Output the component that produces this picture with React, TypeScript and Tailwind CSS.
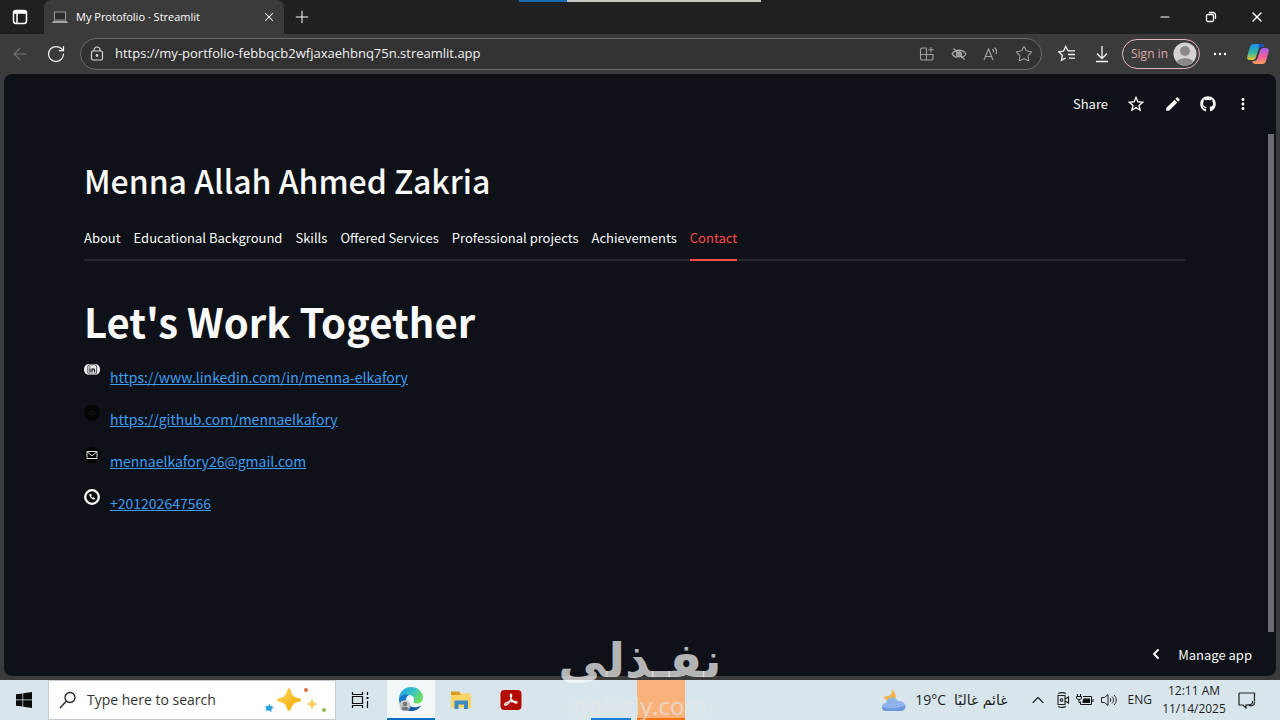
import { useState } from 'react';
import { ArrowLeft, ChevronLeft, ChevronUp, Minus, Plus, RotateCw, Star, X } from 'lucide-react';
import { FaGithub } from 'react-icons/fa';
import { MdEdit, MdMoreVert, MdStarOutline } from 'react-icons/md';

const tabs = [
  'About',
  'Educational Background',
  'Skills',
  'Offered Services',
  'Professional projects',
  'Achievements',
  'Contact',
];

const contacts = [
  { icon: <LinkedInIcon />, text: 'https://www.linkedin.com/in/menna-elkafory', href: 'https://www.linkedin.com/in/menna-elkafory' },
  { icon: <GithubIcon />, text: 'https://github.com/mennaelkafory', href: 'https://github.com/mennaelkafory' },
  { icon: <MailIcon />, text: 'mennaelkafory26@gmail.com', href: 'mailto:mennaelkafory26@gmail.com' },
  { icon: <PhoneIcon />, text: '+201202647566', href: 'tel:+201202647566' },
];

function LinkedInIcon() {
  return (
    <svg viewBox="0 0 16 16" className="w-4 h-4">
      <rect x="0" y="1" width="16" height="11" rx="5" fill="#e9eaec" />
      <rect x="3.800" y="1.800" width="8.800" height="9.400" rx="2" fill="#e9eaec" stroke="#14171f" strokeWidth=".7" />
      <path d="M5.900 5.500v4M5.900 3.400v1M8 5.500v4M8 7.600c0-2.400 2.500-2.200 2.500-.4v2.300" stroke="#14171f" strokeWidth="1.200" fill="none" />
    </svg>
  );
}

function GithubIcon() {
  return (
    <svg viewBox="0 0 16 16" className="w-4 h-4">
      <circle cx="8" cy="8" r="8" fill="#040507" />
      <path d="M4.500 8c.5-2 6.500-2 7 0 0 2-7 2-7 0" fill="none" stroke="#12151c" strokeWidth="1" />
    </svg>
  );
}

function MailIcon() {
  return (
    <svg viewBox="0 0 16 16" className="w-4 h-4">
      <circle cx="8" cy="8" r="8" fill="#050507" />
      <path d="M3 4.500h10v7H3zM3.300 5l4.700 3.800L12.700 5" fill="none" stroke="#dedee2" strokeWidth="1" />
    </svg>
  );
}

function PhoneIcon() {
  return (
    <svg viewBox="0 0 16 16" className="w-4 h-4">
      <circle cx="8" cy="8" r="6.800" fill="#0a0c11" stroke="#fff" strokeWidth="2.300" />
      <path d="M5.400 5.200c-.2 2.700 2.500 5.400 5.200 5.300l.5-1.300-1.500-1-.9.600C7.900 8.400 7.400 7.800 7.200 7.200l.6-.9-1-1.500z" fill="#fff" />
    </svg>
  );
}

function TabPanelIcon() {
  return (
    <svg viewBox="0 0 16 16" className="w-4 h-4" fill="none" stroke="#fff" strokeWidth="1.500">
      <rect x="1.500" y="1.500" width="13" height="13" rx="2.500" />
      <path d="M2 4h12M5 4v10" />
      <path d="M2 3h12" strokeWidth="2" />
    </svg>
  );
}

function LaptopIcon() {
  return (
    <svg viewBox="0 0 16 16" className="w-4 h-4">
      <rect x="2.500" y="3" width="11" height="8" fill="#2b2b2b" stroke="#999" />
      <path d="M1 12h14l1 2H0z" fill="#a3a3a3" />
    </svg>
  );
}

function LockIcon() {
  return (
    <svg viewBox="0 0 16 16" className="w-4 h-4" fill="none" stroke="#d4d4d4" strokeWidth="1.200">
      <rect x="2.500" y="5" width="11" height="9" rx="1.500" />
      <path d="M5 5V4a3 3 0 0 1 6 0v1" />
      <circle cx="8" cy="9.500" r=".8" fill="#d4d4d4" />
    </svg>
  );
}

function AppsIcon() {
  return (
    <svg viewBox="0 0 16 16" className="w-4 h-4" fill="none" stroke="#a0a0a0" strokeWidth="1.100">
      <path d="M7.500 2H3a1.500 1.500 0 0 0-1.500 1.500v9A1.500 1.500 0 0 0 3 14h9.500a1.500 1.500 0 0 0 1.500-1.500V8.500H1.500M7.500 2v12M12 1v5.500M9.300 3.700h5.500" />
    </svg>
  );
}

function EyeOffIcon() {
  return (
    <svg viewBox="0 0 16 16" className="w-4 h-4" fill="none" stroke="#a8a8a8" strokeWidth="1.300">
      <path d="M1 8c3-5 11-5 14 0M1 8c1.500 2 3 3 5 3.500M15 8c-1.300 2-3 3.300-5 3.700" />
      <circle cx="8" cy="8.300" r="2.500" fill="#8a8a8a" />
      <path d="M2.500 2.500l11 11" />
    </svg>
  );
}

function ReadAloudIcon() {
  return (
    <svg viewBox="0 0 16 16" className="w-4 h-4" fill="none" stroke="#a0a0a0" strokeWidth="1.200">
      <path d="M1 14L5.500 3 10 14M2.500 10.500h6M9.500 3c1 1 1.300 2.300 1 3.500M11.500 1.500c2 1.800 2.500 4 1.700 6.500" />
    </svg>
  );
}

function FavoritesIcon() {
  return (
    <svg viewBox="0 0 18 18" className="w-[18px] h-[18px]" fill="none" stroke="#f2f2f2" strokeWidth="1.300">
      <path d="M10 6L7.700 1.500 5.500 6.200l-4.700.6 3.500 3.500-.9 4.900L7.700 13M10 5.800h7M10 9.500h7M11 13.200h6" />
    </svg>
  );
}

function DownloadIcon() {
  return (
    <svg viewBox="0 0 16 18" className="w-4 h-[18px]" fill="none" stroke="#f2f2f2" strokeWidth="1.300">
      <path d="M8 1v12M3 8.500L8 13.500l5-5M2 16.500h12" />
    </svg>
  );
}

function DotsIcon() {
  return (
    <svg viewBox="0 0 16 16" className="w-4 h-4" fill="#fff">
      <circle cx="3" cy="8" r="1.200" />
      <circle cx="8" cy="8" r="1.200" />
      <circle cx="13" cy="8" r="1.200" />
    </svg>
  );
}

function CopilotIcon() {
  return (
    <svg viewBox="0 0 24 24" className="w-6 h-6">
      <defs>
        <linearGradient id="copL" x1="0" y1="0" x2="0" y2="1">
          <stop offset="0" stopColor="#1d8ff0" />
          <stop offset=".55" stopColor="#35b9a0" />
          <stop offset="1" stopColor="#e9c52f" />
        </linearGradient>
        <linearGradient id="copR" x1="0" y1="0" x2="0" y2="1">
          <stop offset="0" stopColor="#a45cf0" />
          <stop offset=".55" stopColor="#f0609a" />
          <stop offset="1" stopColor="#fb9d5c" />
        </linearGradient>
      </defs>
      <path d="M8 2h7c2 0 2.700 1 3.200 3h-3.500c-1.200 0-1.800.7-2.200 2L10 15c-.6 2-1.300 3-3.500 3H4c-2.500 0-3.300-1.500-2.600-4L4 5c.6-2 1.700-3 4-3z" fill="url(#copL)" />
      <path d="M13 2h2c2 0 2.700 1 3.200 3h-3.500c-1.200 0-1.800.7-2.200 2z" fill="#1a54c8" />
      <path d="M16 22H9.500c-2 0-2.800-1-3.200-3h2.500c1.200 0 2-.8 2.300-2L14 9c.6-2 1.300-3 3.500-3H20c2.500 0 3.300 1.500 2.600 4L20 19c-.6 2-1.700 3-4 3z" fill="url(#copR)" />
    </svg>
  );
}

function WindowsIcon() {
  return (
    <svg viewBox="0 0 16 16" className="w-4 h-4" fill="#0b0b0b">
      <path d="M0 2.300l6.500-.9v6.200H0zM7.200 1.300L16 0v7.600H7.200zM0 8.300h6.500v6.300L0 13.700zM7.200 8.300H16V16l-8.800-1.300z" />
    </svg>
  );
}

function SparklesIcon() {
  return (
    <svg viewBox="0 0 64 28" className="w-16 h-7 shrink-0">
      <defs>
        <linearGradient id="gold" x1="0" y1="0" x2="1" y2="1">
          <stop offset="0" stopColor="#fddb5c" />
          <stop offset="1" stopColor="#f5a300" />
        </linearGradient>
      </defs>
      <path d="M26 2c2 0 2.500 7 5 8.500S38 12 38 14s-5 2-7 3.500-3 7.500-5 7.500-2.500-6-5-7.500S14 16 14 14s4.500-2 7-3.500S24 2 26 2z" fill="url(#gold)" />
      <path d="M49 12c1 4 2 5 6 6-4 1-5 2-6 6-1-4-2-5-6-6 4-1 5-2 6-6z" fill="#f5cf5d" />
      <path d="M6 18c1.500 1 2 3 5 3-2 1.500-3 2-2.500 5C6.500 25 5 24 2 25c1.500-2 1.500-2.500 0-5 3 .5 3.500 0 4-2z" fill="#2aa0dc" />
      <circle cx="43" cy="4" r="2" fill="#dd6b42" />
      <circle cx="61" cy="24" r="2" fill="#8fbf4d" />
    </svg>
  );
}

function TaskViewIcon() {
  return (
    <svg viewBox="0 0 18 16" className="w-[18px] h-4" fill="none" stroke="#111" strokeWidth="1.200">
      <path d="M1.500 0v2.500h10V0M1.500 16v-2.500h10V16M1.500 4.500h10v7h-10zM16.500 0v3M16.500 9v7" />
      <path d="M15.500 6h2" strokeWidth="2" />
    </svg>
  );
}

function EdgeIcon() {
  return (
    <svg viewBox="0 0 26 26" className="w-[26px] h-[26px]">
      <defs>
        <linearGradient id="edgeTop" x1="0" y1="0" x2="1" y2=".4">
          <stop offset="0" stopColor="#1e9be2" />
          <stop offset=".55" stopColor="#32c2cd" />
          <stop offset="1" stopColor="#6cdc63" />
        </linearGradient>
        <linearGradient id="edgeMid" x1="0" y1="0" x2="1" y2="1">
          <stop offset="0" stopColor="#1684d6" />
          <stop offset="1" stopColor="#0c4f9a" />
        </linearGradient>
      </defs>
      <path d="M1 12C2 5 7 1 13 1c7 0 12 5 12 10.500 0 4-3 6-6 6-2.500 0-4-1-3.500-2 1.500-2 .5-6-4-6.500C7 8.500 2.500 9 1 12z" fill="url(#edgeTop)" />
      <path d="M1 12c2.500-4 7-4.500 10.500-3C7.500 10 7 15 10 18.500c3 3.500 9 3.500 13 1C21 23.500 17 25 13 25 5 25 .5 18.500 1 12z" fill="url(#edgeMid)" />
      <circle cx="7" cy="19.500" r="5.500" fill="#c6c6c6" />
      <circle cx="7" cy="18" r="2.300" fill="#777" />
      <path d="M3.300 23c.5-3 7-3 7.500 0-2 2-5.500 2-7.500 0z" fill="#777" />
    </svg>
  );
}

function FolderIcon() {
  return (
    <svg viewBox="0 0 22 20" className="w-[22px] h-5">
      <path d="M1 1.500h8l2 2.500h10v4H1z" fill="#d79b1e" />
      <path d="M1 5h8.500l1.500-1.500h10V18H1z" fill="#fbd468" />
      <path d="M4.500 10.500h13.500V19h-4v-4.500H8.500V19h-4z" fill="#3c8cc4" />
    </svg>
  );
}

function AcrobatIcon() {
  return (
    <svg viewBox="0 0 22 22" className="w-[22px] h-[22px]">
      <rect x=".5" y="1" width="21" height="20" rx="4" fill="#b30b00" />
      <path d="M5 16c-1.500-1 2-3 5.500-3.500s7 0 6.500 1.300c-.8 1.500-6-2.300-6.600-6.500-.2-3 1.500-2.500 1.200-.3C11.200 10.500 7.500 17.500 5 16z" fill="none" stroke="#fff" strokeWidth="1.300" />
    </svg>
  );
}

function WeatherIcon() {
  return (
    <svg viewBox="0 0 26 24" className="w-[26px] h-6">
      <path d="M11 1c1 4-1.500 8-8.500 7.500C4 12 7 13 11 13c4-1 6-6 0-12z" fill="#f2b544" />
      <path d="M6 23c-7 0-6.500-7.500-1-8 .5-6 9-8 12-2 9-1 9.500 10 2.500 10z" fill="#8fb3ec" />
      <path d="M6 23c-4 0-5-2-5-4 5 2 18 2 23.500-2 0 4-2 6-5 6z" fill="#6d97dd" />
    </svg>
  );
}

function CameraIcon() {
  return (
    <svg viewBox="0 0 14 16" className="w-3.5 h-4" fill="none" stroke="#222" strokeWidth="1.100">
      <path d="M2 1.500c2.500-1 6-1 8 0M2 14.500c2.500 1 6 1 8 0M2 3.500h7v9H2zM9 7l3.500-2v6L9 9" />
      <circle cx="5.500" cy="8" r="1.300" />
    </svg>
  );
}

function BatteryIcon() {
  return (
    <svg viewBox="0 0 18 14" className="w-[18px] h-3.5" fill="none" stroke="#111" strokeWidth="1">
      <path d="M7 3.500h8.500v8h-11v-3M17 6v3M1.500 1v2M4.500 1v2M.5 3.500h5v1.500c0 2-5 2-5 0zM3 6.500v3h1.500" />
      <path d="M7.500 5.500h6.500V10H6.500V8z" fill="#111" stroke="none" />
    </svg>
  );
}

function VolumeIcon() {
  return (
    <svg viewBox="0 0 18 16" className="w-[18px] h-4" fill="none" stroke="#222" strokeWidth="1">
      <path d="M1.500 5.500h3L8 2.500v11l-3.500-3h-3zM10 6c1 1 1 3 0 4M12 4.500c2 2 2 5 0 7M14 3c3 3 3 7 0 10" />
    </svg>
  );
}

function NotificationIcon() {
  return (
    <svg viewBox="0 0 18 18" className="w-[18px] h-[18px]" fill="none" stroke="#222" strokeWidth="1.200">
      <path d="M1 2h15.500v8M1 2v12h4l3 3v-3h2M16.500 10.500c.5 4-4 5.500-6 3.300 3 .3 4.500-1.300 4-4" />
    </svg>
  );
}

function TabBar() {
  return (
    <header className="relative h-[34px] bg-[#202020] flex items-stretch text-white">
      <button aria-label="Tab actions" className="w-11 pl-3 flex items-center">
        <TabPanelIcon />
      </button>
      <div className="w-60 rounded-t-lg bg-[#3b3b3b] flex items-center px-2 text-[11px]">
        <LaptopIcon />
        <span className="ml-2 flex-1 whitespace-nowrap">My Protofolio · Streamlit</span>
        <button aria-label="Close tab">
          <X className="w-3.5 h-3.5" strokeWidth={1.8} />
        </button>
      </div>
      <button aria-label="New tab" className="ml-2">
        <Plus className="w-5 h-5" strokeWidth={1.2} />
      </button>
      <div className="ml-auto flex items-center">
        <button aria-label="Minimize" className="w-[46px] flex justify-center">
          <Minus className="w-3.5 h-3.5" strokeWidth={2} />
        </button>
        <button aria-label="Restore" className="w-[46px] flex justify-center">
          <svg viewBox="0 0 12 12" className="w-3 h-3" fill="none" stroke="#fff" strokeWidth="1.300">
            <rect x="1.500" y="3.500" width="7" height="7" rx="1.500" />
            <path d="M4 1.500h4a2.500 2.500 0 0 1 2.500 2.500v4" />
          </svg>
        </button>
        <button aria-label="Close" className="w-[46px] flex justify-center">
          <X className="w-4 h-4" strokeWidth={2} />
        </button>
      </div>
      <div className="absolute top-0 left-[519px] flex h-0.5">
        <div className="w-12 bg-[#1769b0]" />
        <div className="w-[194px] bg-[#c9c9c4]" />
      </div>
    </header>
  );
}

function Toolbar() {
  return (
    <div className="h-10 bg-[#3b3b3b] flex items-center pl-2.5 pr-2.5">
      <button aria-label="Back">
        <ArrowLeft className="w-5 h-5 text-[#777]" strokeWidth={1.3} />
      </button>
      <button aria-label="Refresh" className="ml-4">
        <RotateCw className="w-5 h-5 text-[#eee]" strokeWidth={1.5} />
      </button>
      <div className="ml-3.5 flex-1 h-8 rounded-full border border-[#6a6a6a] bg-[#323232] flex items-center px-2 gap-4">
        <LockIcon />
        <input
          aria-label="Address"
          className="flex-1 min-w-0 -ml-1.5 bg-transparent text-[13px] text-[#f0f0f0] outline-none"
          defaultValue="https://my-portfolio-febbqcb2wfjaxaehbnq75n.streamlit.app"
        />
        <button aria-label="App available"><AppsIcon /></button>
        <button aria-label="Tracking prevention"><EyeOffIcon /></button>
        <button aria-label="Read aloud"><ReadAloudIcon /></button>
        <button aria-label="Add to favorites">
          <Star className="w-[18px] h-[18px] text-[#a0a0a0]" strokeWidth={1.4} />
        </button>
      </div>
      <button aria-label="Favorites" className="ml-4"><FavoritesIcon /></button>
      <button aria-label="Downloads" className="ml-[18px]"><DownloadIcon /></button>
      <button className="ml-3 h-[30px] w-[78px] rounded-full border border-[#e8b4bc] flex items-center justify-between pl-2 pr-0.5 text-xs text-[#dba6ae] whitespace-nowrap">
        Sign in
        <svg viewBox="0 0 24 24" className="w-6 h-6">
          <circle cx="12" cy="12" r="11.500" fill="#d5d3d1" />
          <circle cx="12" cy="9" r="5" fill="#8b8987" />
          <path d="M4 20c1-5 15-5 16 0-4 4.500-12 4.500-16 0z" fill="#8b8987" />
        </svg>
      </button>
      <button aria-label="Settings and more" className="ml-3"><DotsIcon /></button>
      <button aria-label="Copilot" className="ml-[18px]"><CopilotIcon /></button>
    </div>
  );
}

function Portfolio() {
  const [active, setActive] = useState('Contact');

  return (
    <main className="relative flex-1 rounded-lg bg-[#0e1117] text-[#fafafa] font-['Noto_Sans_CJK_SC','Noto_Sans',sans-serif]">
      <div className="h-[60px] flex items-center justify-end gap-[18px] pr-6">
        <button className="text-[13px]">Share</button>
        <button aria-label="Star app"><MdStarOutline className="w-5 h-5" /></button>
        <button aria-label="Edit source"><MdEdit className="w-[18px] h-[18px]" /></button>
        <button aria-label="View on GitHub"><FaGithub className="w-4 h-4" /></button>
        <button aria-label="More"><MdMoreVert className="w-[18px] h-[18px]" /></button>
      </div>

      <div className="pl-20 pr-[90px] pt-6">
        <h2 className="text-[32px] leading-[44px] font-medium">Menna Allah Ahmed Zakria</h2>

        <div role="tablist" className="mt-[15px] flex gap-[13px] border-b-2 border-[#262730]">
          {tabs.map((tab) => (
            <button
              key={tab}
              role="tab"
              aria-selected={active === tab}
              onClick={() => setActive(tab)}
              className={`h-11 -mb-0.5 border-b-2 text-[13px] whitespace-nowrap ${
                active === tab ? 'border-[#ff4b4b] text-[#ff4b4b]' : 'border-transparent'
              }`}
            >
              {tab}
            </button>
          ))}
        </div>

        <h1 className="mt-[30px] text-[40px] leading-[60px] font-bold">Let's Work Together</h1>

        <ul className="mt-3 text-sm leading-6">
          {contacts.map((contact) => (
            <li key={contact.text} className="flex h-[42px] gap-2.5">
              {contact.icon}
              <a href={contact.href} className="mt-0.5 text-[#3d9df3] underline">
                {contact.text}
              </a>
            </li>
          ))}
        </ul>
      </div>

      <div className="absolute right-0.5 top-[60px] bottom-11 w-1.5 bg-[#6b6c72]" />
      <button className="absolute right-6 bottom-3 flex items-center gap-3.5 text-[13px]">
        <ChevronLeft className="w-4 h-4" strokeWidth={3} />
        Manage app
      </button>
    </main>
  );
}

function Taskbar() {
  return (
    <footer className="h-10 bg-[#d8e6ec] flex items-stretch text-[#1c1c1c]">
      <button aria-label="Start" className="w-12 flex items-center justify-center">
        <WindowsIcon />
      </button>
      <label className="w-[288px] bg-white border border-[#c3ccd0] flex items-center pl-2.5 pr-2">
        <svg viewBox="0 0 18 18" className="w-[18px] h-[18px] shrink-0" fill="none" stroke="#222" strokeWidth="1.300">
          <circle cx="11" cy="6.500" r="5" />
          <path d="M7.500 10L1 17" />
        </svg>
        <input
          aria-label="Search"
          className="ml-2.5 flex-1 min-w-0 bg-transparent text-sm placeholder:text-[#333] outline-none"
          placeholder="Type here to search"
        />
        <SparklesIcon />
      </label>
      <button aria-label="Task view" className="w-12 flex items-center justify-center">
        <TaskViewIcon />
      </button>
      <div className="ml-[3px] flex gap-0.5">
        <button aria-label="Microsoft Edge" className="w-12 flex items-center justify-center bg-[#f2f7fa] border-b-2 border-[#0a70c4]">
          <EdgeIcon />
        </button>
        <button aria-label="File Explorer" className="w-12 flex items-center justify-center">
          <FolderIcon />
        </button>
        <button aria-label="Adobe Acrobat" className="w-12 flex items-center justify-center">
          <AcrobatIcon />
        </button>
        <div className="w-12" />
        <div className="w-12 px-1 flex items-end">
          <div className="h-0.5 flex-1 bg-[#1a7fd0]" />
        </div>
        <div className="w-12 bg-[#fab27c] border-b-2 border-[#f7710d]" />
      </div>

      <div className="ml-auto flex items-center pr-6 text-xs">
        <WeatherIcon />
        <span className="ml-2 text-sm">19°C</span>
        <span dir="rtl" className="ml-2 text-sm font-['DejaVu_Sans',sans-serif]">غائم غالبًا</span>
        <button aria-label="Show hidden icons" className="ml-5">
          <ChevronUp className="w-5 h-5" strokeWidth={1.3} />
        </button>
        <span className="ml-2"><CameraIcon /></span>
        <span className="ml-1.5"><BatteryIcon /></span>
        <span className="ml-1.5"><VolumeIcon /></span>
        <span className="ml-2.5">ENG</span>
        <div className="ml-2.5 w-16 text-center leading-[18px]">
          <div>12:11 AM</div>
          <div>11/14/2025</div>
        </div>
        <button aria-label="Notifications" className="ml-3"><NotificationIcon /></button>
      </div>
    </footer>
  );
}

export default function App() {
  return (
    <div className="relative min-h-screen flex flex-col bg-[#3b3b3b] font-['Open_Sans','Noto_Sans',sans-serif]">
      <TabBar />
      <Toolbar />
      <div className="flex-1 flex flex-col px-1 pb-1">
        <Portfolio />
      </div>
      <Taskbar />
      <div className="absolute bottom-0 inset-x-0 flex flex-col items-center pointer-events-none">
        <div dir="rtl" className="mb-1 text-5xl leading-[56px] font-bold text-white/70 font-['DejaVu_Sans',sans-serif]">نفـذلى</div>
        <div className="text-2xl leading-7 text-[#e4e6e4]/70">nafezly.com</div>
      </div>
    </div>
  );
}
